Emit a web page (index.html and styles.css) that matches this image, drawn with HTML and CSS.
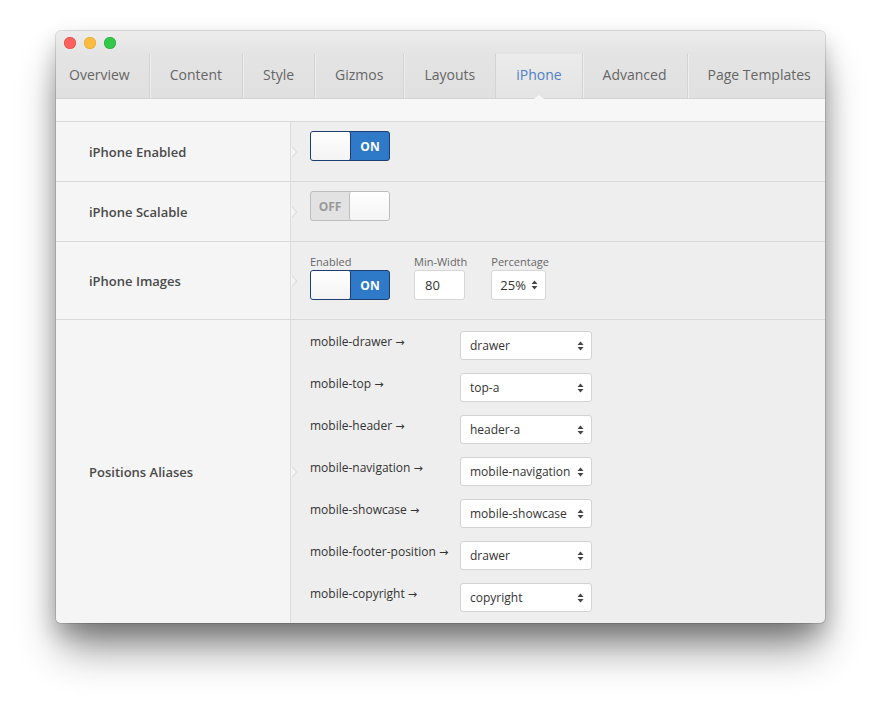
FILE: index.html
```html
<!DOCTYPE html>
<html>
<head>
<meta charset="utf-8">
<link rel="stylesheet" href="styles.css">
</head>
<body>
<div class="window">
  <div class="titlebar">
    <span class="light red"></span><span class="light yellow"></span><span class="light green"></span>
  </div>
  <div class="tabs">
    <div class="tab first">Overview</div>
    <div class="tab">Content</div>
    <div class="tab">Style</div>
    <div class="tab">Gizmos</div>
    <div class="tab">Layouts</div>
    <div class="tab active">iPhone</div>
    <div class="tab">Advanced</div>
    <div class="tab last">Page Templates</div>
  </div>
  <div class="strip"></div>

  <div class="row r60">
    <div class="label">iPhone Enabled</div>
    <div class="content">
      <div class="toggle on"><span class="knob"></span><span class="state">ON</span></div>
    </div>
  </div>

  <div class="row r60">
    <div class="label">iPhone Scalable</div>
    <div class="content">
      <div class="toggle off"><span class="state">OFF</span><span class="knob"></span></div>
    </div>
  </div>

  <div class="row r78">
    <div class="label">iPhone Images</div>
    <div class="content fields">
      <div class="field">
        <div class="flabel">Enabled</div>
        <div class="toggle on"><span class="knob"></span><span class="state">ON</span></div>
      </div>
      <div class="field">
        <div class="flabel">Min-Width</div>
        <div class="input num">80</div>
      </div>
      <div class="field">
        <div class="flabel">Percentage</div>
        <div class="input sel small">25%<svg class="arr" width="7" height="10" viewBox="0 0 7 10"><path d="M3.5 0.5 L6.5 4 H0.5Z M3.5 9.5 L6.5 6 H0.5Z" fill="#444"/></svg></div>
      </div>
    </div>
  </div>

  <div class="row last-row">
    <div class="label">Positions Aliases</div>
    <div class="content aliases">
      <div class="alias"><span class="aname">mobile-drawer <span class="to">→</span></span><div class="input sel wide">drawer<svg class="arr" width="7" height="10" viewBox="0 0 7 10"><path d="M3.5 0.5 L6.5 4 H0.5Z M3.5 9.5 L6.5 6 H0.5Z" fill="#444"/></svg></div></div>
      <div class="alias"><span class="aname">mobile-top <span class="to">→</span></span><div class="input sel wide">top-a<svg class="arr" width="7" height="10" viewBox="0 0 7 10"><path d="M3.5 0.5 L6.5 4 H0.5Z M3.5 9.5 L6.5 6 H0.5Z" fill="#444"/></svg></div></div>
      <div class="alias"><span class="aname">mobile-header <span class="to">→</span></span><div class="input sel wide">header-a<svg class="arr" width="7" height="10" viewBox="0 0 7 10"><path d="M3.5 0.5 L6.5 4 H0.5Z M3.5 9.5 L6.5 6 H0.5Z" fill="#444"/></svg></div></div>
      <div class="alias"><span class="aname">mobile-navigation <span class="to">→</span></span><div class="input sel wide">mobile-navigation<svg class="arr" width="7" height="10" viewBox="0 0 7 10"><path d="M3.5 0.5 L6.5 4 H0.5Z M3.5 9.5 L6.5 6 H0.5Z" fill="#444"/></svg></div></div>
      <div class="alias"><span class="aname">mobile-showcase <span class="to">→</span></span><div class="input sel wide">mobile-showcase<svg class="arr" width="7" height="10" viewBox="0 0 7 10"><path d="M3.5 0.5 L6.5 4 H0.5Z M3.5 9.5 L6.5 6 H0.5Z" fill="#444"/></svg></div></div>
      <div class="alias"><span class="aname">mobile-footer-position <span class="to">→</span></span><div class="input sel wide">drawer<svg class="arr" width="7" height="10" viewBox="0 0 7 10"><path d="M3.5 0.5 L6.5 4 H0.5Z M3.5 9.5 L6.5 6 H0.5Z" fill="#444"/></svg></div></div>
      <div class="alias"><span class="aname">mobile-copyright <span class="to">→</span></span><div class="input sel wide">copyright<svg class="arr" width="7" height="10" viewBox="0 0 7 10"><path d="M3.5 0.5 L6.5 4 H0.5Z M3.5 9.5 L6.5 6 H0.5Z" fill="#444"/></svg></div></div>
    </div>
  </div>
</div>
</body>
</html>
```

FILE: styles.css
```css
* { box-sizing: border-box; }
html, body { margin: 0; padding: 0; background: #ffffff; }
html { height: 100%; }
body {
  font-family: "Open Sans", "Noto Sans", sans-serif;
  color: #333;
  padding: 31px 0 0 56px;
  min-height: 704px;
}
.window {
  width: 769px;
  height: 592px;
  border-radius: 5px;
  overflow: hidden;
  background: #eeeeee;
  box-shadow: 0 0 0 1px rgba(0,0,0,0.12), 0 10px 22px rgba(0,0,0,0.22), 0 30px 40px -6px rgba(0,0,0,0.45);
  display: flex;
  flex-direction: column;
}
.titlebar {
  height: 23px;
  flex: none;
  background: linear-gradient(#ececec, #e4e4e4);
  display: flex;
  align-items: center;
  padding-left: 8px;
  gap: 8px;
  padding-top: 1px;
}
.light { width: 12px; height: 12px; border-radius: 50%; display: block; }
.red { background: #fc605c; box-shadow: inset 0 0 0 0.5px #de4841; }
.yellow { background: #fdbc40; box-shadow: inset 0 0 0 0.5px #dea123; }
.green { background: #34c84a; box-shadow: inset 0 0 0 0.5px #27a83a; }
.tabs {
  height: 45px;
  flex: none;
  display: flex;
  background: linear-gradient(#e4e4e4, #e0e0e0);
  border-bottom: 1px solid #d4d4d4;
}
.tab {
  padding: 0 20px;
  font-size: 14px;
  line-height: 42px;
  color: #666;
  border-right: 1px solid #d3d3d3;
  box-shadow: 1px 0 0 #eeeeee;
  white-space: nowrap;
  position: relative;
}
.tab.first { padding-left: 13px; padding-right: 19px; }
.tab.last { border-right: none; box-shadow: none; }
.tab.active {
  color: #4f80c4;
  background: linear-gradient(#ebebeb, #e4e4e4);
}
.tab.active::after {
  content: "";
  position: absolute;
  left: 50%;
  bottom: -1px;
  margin-left: -5px;
  border: 5px solid transparent;
  border-bottom: 4px solid #f7f7f7;
  border-top: 0;
}
.strip {
  height: 23px;
  flex: none;
  background: #f7f7f7;
  border-bottom: 1px solid #dadada;
}
.row {
  display: flex;
  flex: none;
  border-bottom: 1px solid #d9d9d9;
}
.r60 { height: 60px; }
.r78 { height: 78px; }
.last-row { border-bottom: none; flex: 1 1 auto; min-height: 0; }
.label {
  width: 235px;
  flex: none;
  background: #f5f5f5;
  border-right: 1px solid #dcdcdc;
  display: flex;
  align-items: center;
  padding-left: 33px;
  font-size: 13px;
  font-weight: 600;
  color: #4a4a4a;
  position: relative;
}
.label::after {
  content: "";
  position: absolute;
  right: -6px;
  top: 50%;
  margin-top: -6px;
  border-top: 6px solid transparent;
  border-bottom: 6px solid transparent;
  border-left: 5px solid #f5f5f5;
  filter: drop-shadow(1px 0 0 #d6d6d6);
}
.content {
  flex: 1;
  padding: 9px 19px;
}
.toggle {
  width: 80px;
  height: 30px;
  border-radius: 3px;
  display: flex;
  overflow: hidden;
  font-size: 12px;
  font-weight: 700;
}
.toggle .knob, .toggle .state { width: 40px; display: flex; align-items: center; justify-content: center; }
.toggle.on { border: 1px solid #1e3d70; background: #2f7ac8; }
.toggle.on .knob { background: linear-gradient(#ffffff, #f3f3f3); border-right: 1px solid #1e3d70; border-radius: 0 2px 2px 0; }
.toggle.on .state { color: #fff; flex: 1; }
.toggle.off { border: 1px solid #bdbdbd; background: #e2e2e2; }
.toggle.off .state { color: #999; flex: 1; }
.toggle.off .knob { background: linear-gradient(#ffffff, #f4f4f4); border-left: 1px solid #bdbdbd; border-radius: 2px 0 0 2px; }
.fields { display: flex; gap: 24px; padding-top: 12px; }
.field { display: flex; flex-direction: column; }
.flabel { font-size: 11px; color: #666; line-height: 16px; height: 16px; }
.input {
  height: 30px;
  background: #fff;
  border: 1px solid #d6d6d6;
  border-radius: 3px;
  font-size: 13px;
  color: #333;
  display: flex;
  align-items: center;
  padding-left: 10px;
}
.num { width: 51px; }
.sel { position: relative; }
.small { width: 55px; padding-left: 8px; }
.arr { position: absolute; right: 7px; top: 50%; margin-top: -5px; }
.aliases { display: flex; flex-direction: column; gap: 13px; padding-top: 11px; }
.alias { display: flex; align-items: flex-start; height: 29px; }
.aname { width: 150px; font-size: 12px; color: #333; line-height: 22px; white-space: nowrap; }
.to { font-family: "DejaVu Sans", sans-serif; font-size: 11px; color: #333; }
.wide { width: 132px; height: 29px; padding-left: 9px; border-color: #d3d3d3; font-size: 12px; }
```
